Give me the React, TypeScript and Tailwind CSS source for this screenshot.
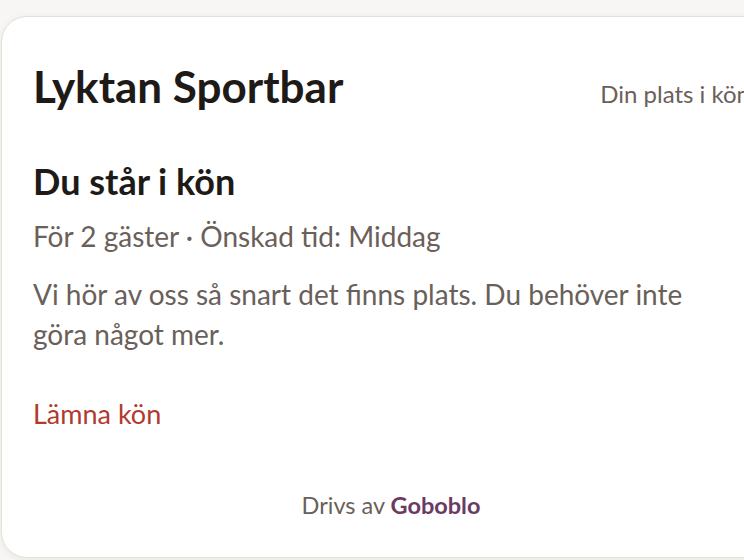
import React from 'react';

export default function App() {
  return (
    <div
      className="w-[744px] h-[560px] overflow-hidden bg-[#f7f6f4]"
      style={{ fontFamily: 'Lato, "Noto Sans", sans-serif' }}
    >
      <div className="pt-4 pl-px">
        <div className="w-[790px] h-[542px] bg-white border border-[#e6e0d6] rounded-[26px] shadow-[0_2px_8px_rgba(0,0,0,0.06)] pl-[31px] pr-[40px] pt-[43px] pb-[36px] flex flex-col">
          {/* header */}
          <div className="flex items-baseline justify-between">
            <h1 className="text-[44px] leading-[52px] font-bold text-[#1e1a17]">Lyktan Sportbar</h1>
            <span className="text-[24px] leading-[40px] text-[#6a605a] whitespace-nowrap">Din plats i kön</span>
          </div>

          <h2 className="mt-[45px] text-[36px] leading-[44px] font-bold text-[#1e1a17]">Du står i kön</h2>
          <p className="mt-[13px] text-[28px] leading-[40px] text-[#6a605a]">För 2 gäster · Önskad tid: Middag</p>
          <p className="mt-[18px] text-[28px] leading-[40px] text-[#6a605a] w-[680px]">
            Vi hör av oss så snart det finns plats. Du behöver inte göra något mer.
          </p>

          <button className="self-start mt-[42px] text-[27px] leading-[36px] text-[#b03a2e]">Lämna kön</button>

          <div className="mt-auto w-[716px] text-center text-[23.5px] leading-[32px] text-[#6a605a]">
            Drivs av <span className="font-bold text-[#6b3a62]">Goboblo</span>
          </div>
        </div>
      </div>
    </div>
  );
}
